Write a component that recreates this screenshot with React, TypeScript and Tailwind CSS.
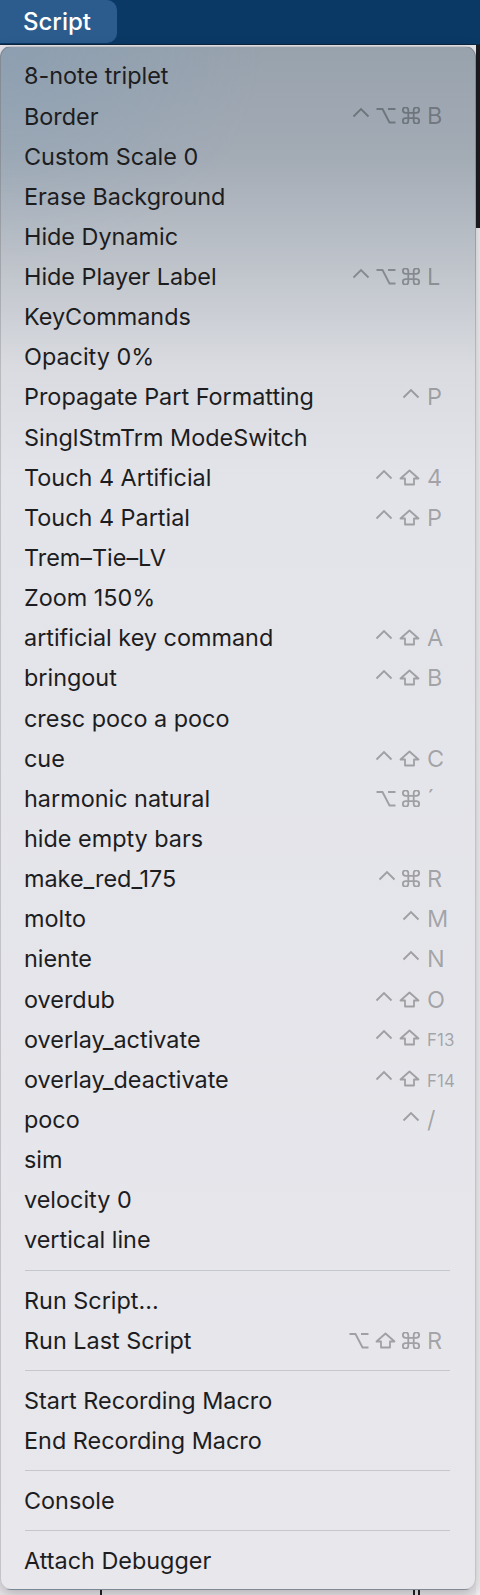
import React from 'react';

type Mod = 'ctrl' | 'opt' | 'cmd' | 'shift';

type Shortcut = {
  mods: Mod[];
  key: string;
  small?: boolean;
};

type Entry =
  | { kind: 'item'; label: string; shortcut?: Shortcut }
  | { kind: 'sep' };

const item = (label: string, mods?: Mod[], key?: string, small?: boolean): Entry => ({
  kind: 'item',
  label,
  shortcut: mods && key ? { mods, key, small } : undefined,
});

const sep: Entry = { kind: 'sep' };

const entries: Entry[] = [
  item('8-note triplet'),
  item('Border', ['ctrl', 'opt', 'cmd'], 'B'),
  item('Custom Scale 0'),
  item('Erase Background'),
  item('Hide Dynamic'),
  item('Hide Player Label', ['ctrl', 'opt', 'cmd'], 'L'),
  item('KeyCommands'),
  item('Opacity 0%'),
  item('Propagate Part Formatting', ['ctrl'], 'P'),
  item('SinglStmTrm ModeSwitch'),
  item('Touch 4 Artificial', ['ctrl', 'shift'], '4'),
  item('Touch 4 Partial', ['ctrl', 'shift'], 'P'),
  item('Trem–Tie–LV'),
  item('Zoom 150%'),
  item('artificial key command', ['ctrl', 'shift'], 'A'),
  item('bringout', ['ctrl', 'shift'], 'B'),
  item('cresc poco a poco'),
  item('cue', ['ctrl', 'shift'], 'C'),
  item('harmonic natural', ['opt', 'cmd'], '´'),
  item('hide empty bars'),
  item('make_red_175', ['ctrl', 'cmd'], 'R'),
  item('molto', ['ctrl'], 'M'),
  item('niente', ['ctrl'], 'N'),
  item('overdub', ['ctrl', 'shift'], 'O'),
  item('overlay_activate', ['ctrl', 'shift'], 'F13', true),
  item('overlay_deactivate', ['ctrl', 'shift'], 'F14', true),
  item('poco', ['ctrl'], '/'),
  item('sim'),
  item('velocity 0'),
  item('vertical line'),
  sep,
  item('Run Script...'),
  item('Run Last Script', ['opt', 'shift', 'cmd'], 'R'),
  sep,
  item('Start Recording Macro'),
  item('End Recording Macro'),
  sep,
  item('Console'),
  sep,
  item('Attach Debugger'),
];

const ModIcon: React.FC<{ mod: Mod }> = ({ mod }) => {
  if (mod === 'ctrl') {
    return (
      <svg width="18" height="17" viewBox="0 0 18 17" fill="none" stroke="currentColor" strokeWidth="1.9">
        <polyline points="1.5,9.5 9,2 16.5,9.5" />
      </svg>
    );
  }
  if (mod === 'opt') {
    return (
      <svg width="20" height="17" viewBox="0 0 20 17" fill="none" stroke="currentColor" strokeWidth="1.9">
        <path d="M0.5 2 H6.5 L13.5 15.5 H19.5 M12 2 H19.5" />
      </svg>
    );
  }
  if (mod === 'shift') {
    return (
      <svg width="21" height="17" viewBox="0 0 21 17" fill="none" stroke="currentColor" strokeWidth="1.8" strokeLinejoin="round">
        <path d="M10.5 1.5 L19.5 9.5 H15 V15.5 H6 V9.5 H1.5 Z" />
      </svg>
    );
  }
  return (
    <svg width="18" height="17" viewBox="2.6 2.6 18.8 18.8" fill="none" stroke="currentColor" strokeWidth="2">
      <path d="M15 6v12a3 3 0 1 0 3-3H6a3 3 0 1 0 3 3V6a3 3 0 1 0-3 3h12a3 3 0 1 0-3-3" />
    </svg>
  );
};

const ShortcutView: React.FC<{ shortcut: Shortcut }> = ({ shortcut }) => {
  return (
    <div className="flex items-baseline text-black/30">
      <div className="flex w-[100px] items-baseline justify-end gap-[6px]">
        {shortcut.mods.map((m, i) => (
          <ModIcon key={i} mod={m} />
        ))}
      </div>
      <span
        className={
          shortcut.small
            ? 'ml-[7px] w-[48px] text-[17px]'
            : 'ml-[7px] w-[48px] text-[23.5px]'
        }
      >
        {shortcut.key}
      </span>
    </div>
  );
};

const App: React.FC = () => {
  return (
    <div className="flex h-[1595px] w-[480px] flex-col overflow-hidden bg-[#ebe9ed] font-['Inter','Liberation_Sans',sans-serif]">
      {/* menu bar */}
      <div className="flex h-[45px] shrink-0 items-start border-b border-[#0d2540] bg-[#0b3966]">
        <div className="flex h-[43px] w-[117px] items-center rounded-r-[10px] bg-[#2c5c8e] pl-[23px] text-[24px] font-medium text-white">
          Script
        </div>
      </div>

      {/* score behind the menu */}
      <div className="relative flex-1">
        <div className="ml-auto flex h-full w-[4px] flex-col">
          <div className="h-[183px] bg-[#1d1d21]" />
          <div className="flex-1 bg-[#f2f2f4]" />
        </div>
        <div className="absolute bottom-0 left-[100px] h-[6px] w-[2px] bg-[#222]" />
        <div className="absolute bottom-0 left-[413px] h-[6px] w-[2px] bg-[#222]" />
        <div className="absolute bottom-0 left-[418px] h-[6px] w-[2px] bg-[#222]" />

        {/* dropdown */}
        <div className="absolute left-0 top-px w-[476px] rounded-[11px] border border-black/15 bg-[radial-gradient(ellipse_260px_220px_at_0px_0px,rgba(110,150,185,0.28),transparent),linear-gradient(180deg,#98a2ad_0px,#a3abb5_110px,#bfc4cb_220px,#d9dbe0_320px,#e3e4e9_430px,#e7e7ec_100%)] pb-[8px] pt-[9px] text-[#1d1d1f] shadow-[0_4px_14px_rgba(0,0,0,0.25)]">
          {entries.map((e, i) =>
            e.kind === 'sep' ? (
              <div key={i} className="flex h-[20px] items-center pl-[24px] pr-[25px]">
                <div className="h-px w-full bg-[#c6c7cc]" />
              </div>
            ) : (
              <div key={i} className="flex h-[40.15px] items-center pl-[23px] text-[23.4px] leading-none">
                <span className="flex-1 whitespace-nowrap">{e.label}</span>
                {e.shortcut && <ShortcutView shortcut={e.shortcut} />}
              </div>
            )
          )}
        </div>
      </div>
    </div>
  );
};

export default App;
